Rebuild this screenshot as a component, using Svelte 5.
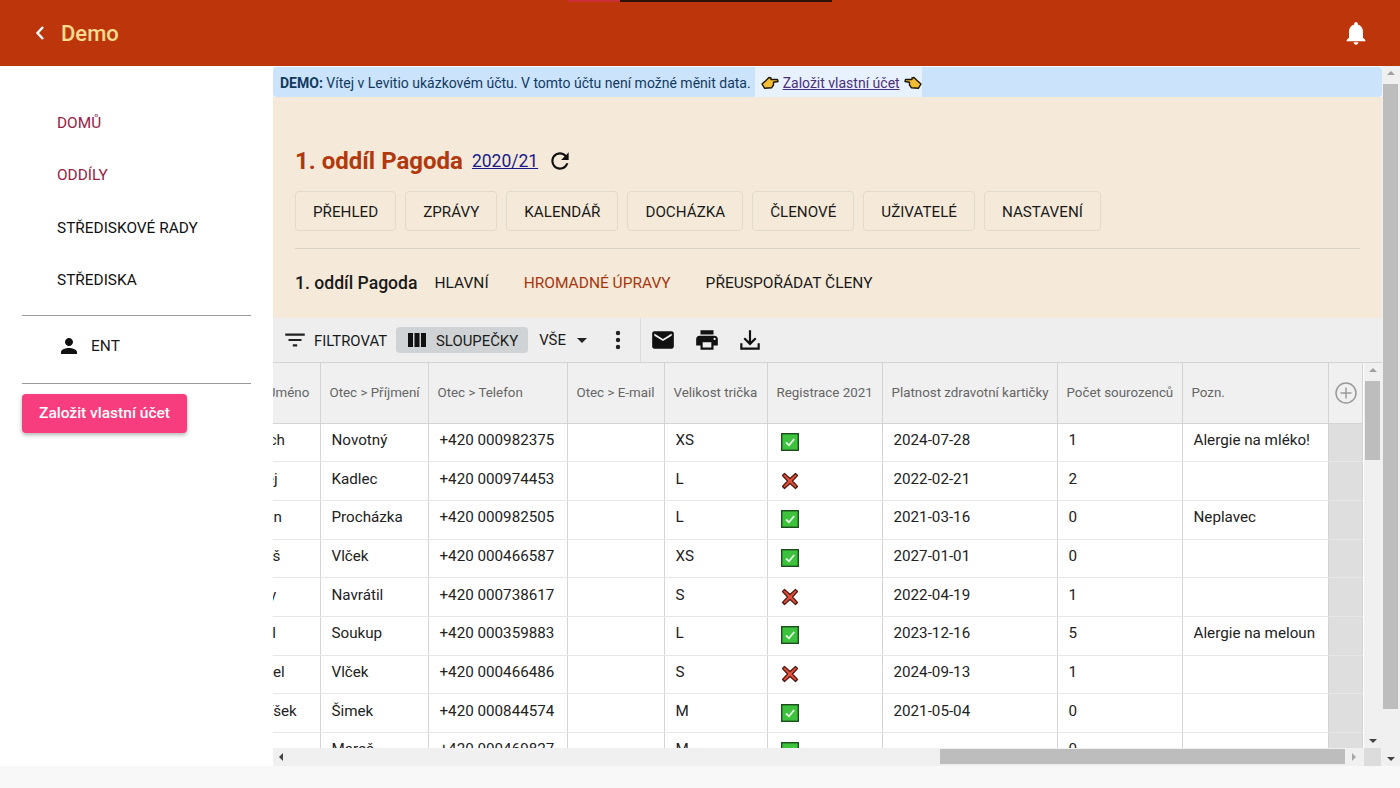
<script>
  const nav = [
    { label: 'DOMŮ', active: true },
    { label: 'ODDÍLY', active: true },
    { label: 'STŘEDISKOVÉ RADY', active: false },
    { label: 'STŘEDISKA', active: false }
  ];
  const tabs = ['PŘEHLED', 'ZPRÁVY', 'KALENDÁŘ', 'DOCHÁZKA', 'ČLENOVÉ', 'UŽIVATELÉ', 'NASTAVENÍ'];
  const columns = ['Otec > Jméno', 'Otec > Příjmení', 'Otec > Telefon', 'Otec > E-mail', 'Velikost trička', 'Registrace 2021', 'Platnost zdravotní kartičky', 'Počet sourozenců', 'Pozn.'];
  const rows = [
    ['Vojtěch', 'Novotný', '+420 000982375', 'XS', true, '2024-07-28', '1', 'Alergie na mléko!'],
    ['Andrej', 'Kadlec', '+420 000974453', 'L', false, '2022-02-21', '2', ''],
    ['Roman', 'Procházka', '+420 000982505', 'L', true, '2021-03-16', '0', 'Neplavec'],
    ['Tomáš', 'Vlček', '+420 000466587', 'XS', true, '2027-01-01', '0', ''],
    ['Danny', 'Navrátil', '+420 000738617', 'S', false, '2022-04-19', '1', ''],
    ['Daniel', 'Soukup', '+420 000359883', 'L', true, '2023-12-16', '5', 'Alergie na meloun'],
    ['Samuel', 'Vlček', '+420 000466486', 'S', false, '2024-09-13', '1', ''],
    ['Honzíšek', 'Šimek', '+420 000844574', 'M', true, '2021-05-04', '0', ''],
    ['', 'Mareš', '+420 000469827', 'M', true, '', '0', '']
  ];
</script>

<div class="page">
  <header class="topbar">
    <svg class="back" viewBox="0 0 12 16" width="12" height="16"><path d="M9 2 L3.5 8 L9 14" fill="none" stroke="#fff" stroke-width="2.4"/></svg>
    <span class="brand">Demo</span>
    <span class="spacer"></span>
    <svg class="bell" viewBox="0 0 24 24" width="28" height="28"><path fill="#fff" d="M12 22c1.1 0 2-.9 2-2h-4c0 1.1.9 2 2 2zm6-6v-5c0-3.07-1.63-5.64-4.5-6.32V4c0-.83-.67-1.5-1.5-1.5s-1.5.67-1.5 1.5v.68C7.64 5.36 6 7.92 6 11v5l-2 2v1h16v-1l-2-2z"/></svg>
    <div class="sliver"><i class="red"></i><i class="dark"></i></div>
  </header>

  <div class="body">
    <aside class="side">
      <nav class="nav">
        {#each nav as item}
          <a class="nav-item" class:active={item.active} href="#top">{item.label}</a>
        {/each}
      </nav>
      <div class="user">
        <svg viewBox="0 0 24 24" width="24" height="24"><path fill="#111" d="M12 12c2.21 0 4-1.79 4-4s-1.79-4-4-4-4 1.79-4 4 1.79 4 4 4zm0 2c-2.67 0-8 1.34-8 4v2h16v-2c0-2.66-5.33-4-8-4z"/></svg>
        <span>ENT</span>
      </div>
      <button class="cta">Založit vlastní účet</button>
    </aside>

    <main class="main">
      <div class="banner">
        <span class="banner-text"><b>DEMO:</b> Vítej v Levitio ukázkovém účtu. V tomto účtu není možné měnit data.</span>
        <span class="banner-link">
          <svg viewBox="0 0 18 13" width="18" height="13"><path d="M1 8 L5 4.5 L8 1.5 L10 2 L10 3.5 L16.5 3.5 L17 5.5 L12.5 6.2 L12.5 9 L10.5 11.8 L3.5 12.2 Z" fill="#f3bd35" stroke="#1d1607" stroke-width="1.4" stroke-linejoin="round"/></svg>
          <a href="#top">Založit vlastní účet</a>
          <svg viewBox="0 0 18 13" width="18" height="13"><path d="M17 8 L13 4.5 L10 1.5 L8 2 L8 3.5 L1.5 3.5 L1 5.5 L5.5 6.2 L5.5 9 L7.5 11.8 L14.5 12.2 Z" fill="#f3bd35" stroke="#1d1607" stroke-width="1.4" stroke-linejoin="round"/></svg>
        </span>
      </div>

      <section class="hero">
        <div class="title-row">
          <h1>1. oddíl Pagoda</h1>
          <a class="year" href="#top">2020/21</a>
          <svg viewBox="0 0 24 24" width="26" height="26"><path fill="#111" d="M17.65 6.35C16.2 4.9 14.21 4 12 4c-4.42 0-7.99 3.58-7.99 8s3.57 8 7.99 8c3.73 0 6.84-2.55 7.73-6h-2.08c-.82 2.33-3.04 4-5.65 4-3.31 0-6-2.69-6-6s2.69-6 6-6c1.66 0 3.14.69 4.22 1.78L13 11h7V4l-2.35 2.35z"/></svg>
        </div>
        <div class="tabs">
          {#each tabs as t}<button class="tab">{t}</button>{/each}
        </div>
        <div class="subrow">
          <strong>1. oddíl Pagoda</strong>
          <span class="sub">HLAVNÍ</span>
          <span class="sub current">HROMADNÉ ÚPRAVY</span>
          <span class="sub">PŘEUSPOŘÁDAT ČLENY</span>
        </div>
      </section>

      <div class="toolbar">
        <span class="tool t-filter">
          <svg viewBox="0 0 24 24" width="26" height="26"><path fill="#222" d="M10 18h4v-2h-4v2zM3 6v2h18V6H3zm3 7h12v-2H6v2z"/></svg>
          <span class="lbl">FILTROVAT</span>
        </span>
        <span class="tool t-cols">
          <svg viewBox="0 0 24 24" width="24" height="24"><path fill="#111" d="M3 5h5v14H3zM9.5 5h5v14h-5zM16 5h5v14h-5z"/></svg>
          <span class="lbl">SLOUPEČKY</span>
        </span>
        <span class="tool t-all">VŠE <i class="caret"></i></span>
        <svg class="dots" viewBox="0 0 6 24" width="6" height="24"><circle cx="3" cy="5" r="2.2" fill="#222"/><circle cx="3" cy="12" r="2.2" fill="#222"/><circle cx="3" cy="19" r="2.2" fill="#222"/></svg>
        <span class="sep"></span>
        <svg class="ic-mail" viewBox="0 0 24 24" width="26" height="26"><path fill="#111" d="M20 4H4c-1.1 0-2 .9-2 2v12c0 1.1.9 2 2 2h16c1.1 0 2-.9 2-2V6c0-1.1-.9-2-2-2zm0 4l-8 5-8-5V6l8 5 8-5v2z"/></svg>
        <svg class="ic-print" viewBox="0 0 24 24" width="26" height="26"><path fill="#111" d="M19 8H5c-1.66 0-3 1.34-3 3v6h4v4h12v-4h4v-6c0-1.66-1.34-3-3-3zm-3 11H8v-5h8v5zm3-7c-.55 0-1-.45-1-1s.45-1 1-1 1 .45 1 1-.45 1-1 1zm-1-9H6v4h12V3z"/></svg>
        <svg class="ic-down" viewBox="0 0 24 24" width="26" height="26"><path fill="#111" d="M16.6 9.6 13 13.2V3h-2v10.2L7.4 9.6 6 11l6 6 6-6-1.4-1.4zM19 19V15h2v6H3v-6h2v4h14z"/></svg>
      </div>

      <div class="grid-area">
        <div class="table-view">
          <table>
            <thead>
              <tr>
                {#each columns as c}<th>{c}</th>{/each}
                <th class="add">
                  <svg viewBox="0 0 24 24" width="24" height="24"><circle cx="12" cy="12" r="10" fill="none" stroke="#9a9a9a" stroke-width="1.5"/><path d="M12 6.5v11M6.5 12h11" stroke="#9a9a9a" stroke-width="1.5"/></svg>
                </th>
              </tr>
            </thead>
            <tbody>
              {#each rows as r}
                <tr>
                  <td>{r[0]}</td>
                  <td>{r[1]}</td>
                  <td>{r[2]}</td>
                  <td></td>
                  <td>{r[3]}</td>
                  <td class="mark">
                    {#if r[4]}
                      <svg viewBox="0 0 18 18" width="18" height="18"><rect x=".7" y=".7" width="16.6" height="16.6" fill="#3cc23c" stroke="#1b4f1b" stroke-width="1.4"/><path d="M5 9.5 L8 12.3 L13.2 6" fill="none" stroke="#e8fbe8" stroke-width="1.8"/></svg>
                    {:else}
                      <svg viewBox="0 0 18 18" width="18" height="18"><path d="M3.5 1.5 L9 6.5 L14.5 1.5 L16.5 3.5 L11.5 9 L16.5 14.5 L14.5 16.5 L9 11.5 L3.5 16.5 L1.5 14.5 L6.5 9 L1.5 3.5 Z" fill="#e2503a" stroke="#4c1a12" stroke-width="1.2" stroke-linejoin="round"/></svg>
                    {/if}
                  </td>
                  <td>{r[5]}</td>
                  <td>{r[6]}</td>
                  <td>{r[7]}</td>
                  <td class="filler"></td>
                </tr>
              {/each}
            </tbody>
          </table>
        </div>

        <div class="vbar">
          <i class="arrow up"></i>
          <div class="vthumb"></div>
          <i class="arrow down"></i>
        </div>
        <div class="hbar">
          <i class="arrow left"></i>
          <div class="hthumb"></div>
          <i class="arrow right"></i>
          <div class="corner"></div>
        </div>
      </div>
    </main>

    <div class="page-bar">
      <i class="arrow up"></i>
      <div class="page-thumb"></div>
      <i class="arrow down"></i>
    </div>
  </div>
  <div class="foot"></div>
</div>

<style>
  :global(body) { margin: 0; background: #f8f8f8; overflow: hidden; }
  .page { width: 1400px; height: 788px; display: flex; flex-direction: column; font-family: Roboto, "Liberation Sans", sans-serif; color: #1a1a1a; overflow: hidden; }
  .topbar { position: relative; flex: 0 0 66px; background: #bd360b; display: flex; align-items: center; padding: 0 30px 0 34px; }
  .back { margin-right: 15px; }
  .brand { color: #fddc92; font-size: 22px; font-weight: 500; }
  .spacer { flex: 1; }
  .sliver { position: absolute; left: 568px; top: 0; display: flex; height: 2px; }
  .sliver .red { width: 52px; background: #c9303a; }
  .sliver .dark { width: 212px; background: #2a1208; }

  .body { flex: 0 0 700px; display: flex; min-height: 0; }
  .side { flex: 0 0 273px; box-sizing: border-box; background: #fff; padding: 30.5px 22px 0; }
  .nav { display: flex; flex-direction: column; border-bottom: 1px solid #999; padding-bottom: 8.1px; }
  .nav-item { height: 52.6px; line-height: 52.6px; padding-left: 35px; font-size: 15.4px; color: #111; text-decoration: none; }
  .nav-item.active { color: #982244; }
  .user { display: flex; align-items: center; gap: 10px; height: 67px; box-sizing: content-box; padding: 0 0 0 35px; border-bottom: 1px solid #999; font-size: 15.5px; }
  .user svg, .user span { position: relative; top: -3px; }
  .cta { margin-top: 10px; display: block; width: 165px; height: 39px; background: #f73d7e; color: #fff; border: 0; border-radius: 4px; font: 500 15.5px Roboto, sans-serif; box-shadow: 0 2px 4px rgba(0,0,0,.3); }

  .main { flex: 0 0 1109px; display: flex; flex-direction: column; min-width: 0; }
  .banner { flex: 0 0 30px; margin-top: 1px; background: #cbe3fb; border-radius: 4px; display: flex; align-items: center; padding-left: 7px; font-size: 14px; color: #123a63; box-sizing: border-box; }
  .banner-text { white-space: nowrap; padding-top: 1px; }
  .banner-link { margin-left: 4px; height: 30px; width: 167px; background: #e7f2fe; display: flex; align-items: center; gap: 4px; padding: 1px 0 0 6px; box-sizing: border-box; }
  .banner-link a { color: #4b2f7a; white-space: nowrap; }
  .hero { flex: 0 0 221px; box-sizing: border-box; background: #f5ead9; padding: 47px 22px 0; display: flex; flex-direction: column; }
  .title-row { display: flex; align-items: center; height: 34px; }
  h1 { margin: 0; font-size: 24px; font-weight: 700; color: #b2380e; }
  .year { margin: 0 9px; font-size: 17.5px; color: #1a1a8c; }
  .tabs { display: flex; gap: 9px; margin-top: 13px; padding-bottom: 17px; border-bottom: 1px solid #d9d1c4; }
  .tab { height: 40px; padding: 2px 17px 0; background: #f5ead9; border: 1px solid #e2dacc; border-radius: 4px; font: 400 15.2px Roboto, sans-serif; color: #1a1a1a; }
  .subrow { display: flex; align-items: center; height: 68px; box-sizing: border-box; font-size: 15.5px; }
  .subrow strong { font-size: 17.6px; font-weight: 500; margin-right: 17px; }
  .sub { margin-right: 35px; }
  .sub.current { color: #a8370f; }

  .toolbar { flex: 0 0 44px; box-sizing: border-box; background: #eee; border-bottom: 1px solid #d4d4d4; display: flex; align-items: center; font-size: 14.9px; }
  .tool { display: inline-flex; align-items: center; }
  .lbl { padding-top: 2px; }
  .t-filter { margin-left: 9px; gap: 6px; width: 114px; }
  .t-cols { gap: 7px; height: 26px; padding: 0 10px 0 9px; background: #d0d3d5; border-radius: 4px; }
  .t-all { margin-left: 11px; gap: 10px; }
  .caret { display: inline-block; border: 5.5px solid transparent; border-top-color: #222; border-bottom: 0; margin-left: 1px; }
  .dots { margin-left: 28px; }
  .sep { width: 1px; height: 44px; background: #dcdcdc; margin: 0 9px 0 19px; }
  .ic-mail { margin-right: 18px; }
  .ic-print { margin-right: 17px; }

  .grid-area { flex: 1; min-height: 0; position: relative; background: #fff; overflow: hidden; }
  .table-view { position: absolute; left: 0; top: 0; right: 18px; bottom: 18px; overflow: hidden; }
  table { border-collapse: collapse; table-layout: fixed; width: 1155px; margin-left: -100px; font-size: 15.2px; }
  th, td { border: 1px solid #d4d4d4; box-sizing: border-box; padding: 0 0 0 8.5px; text-align: left; white-space: nowrap; overflow: hidden; }
  thead th { height: 60px; background: #f0f0f0; color: #666; font-size: 13.35px; font-weight: 400; border-top: 0; }
  tbody td { height: 38.7px; padding: 0 0 5px 10.5px; color: #222; vertical-align: middle; border-top-color: #e6e6e6; border-bottom-color: #e6e6e6; }
  thead th:first-child { padding-left: 53px; }
  tbody td:first-child { padding-left: 60px; }
  tbody td.mark { padding: 0 0 1px 13px; line-height: 0; }
  th:nth-child(1) { width: 147px; }
  th:nth-child(2) { width: 108px; }
  th:nth-child(3) { width: 139px; }
  th:nth-child(4) { width: 97px; }
  th:nth-child(5) { width: 103px; }
  th:nth-child(6) { width: 115px; }
  th:nth-child(7) { width: 175px; }
  th:nth-child(8) { width: 125px; }
  th:nth-child(9) { width: 146px; }
  th:nth-child(10) { width: 34px; padding: 0 0 0 5px; }
  th.add svg { display: block; }
  tbody td.filler { background: #dedede; padding: 0; }

  .vbar { position: absolute; right: 0; top: 0; bottom: 18px; width: 18px; background: #f0f0f0; }
  .vthumb { position: absolute; left: 1px; top: 18px; width: 15px; height: 79px; background: #bdbdbd; }
  .hbar { position: absolute; left: 0; right: 0; bottom: 0; height: 18px; background: #f0f0f0; }
  .hthumb { position: absolute; left: 667px; top: 1px; width: 405px; height: 15px; background: #bdbdbd; }
  .corner { position: absolute; right: 1px; top: 0; width: 17px; height: 18px; background: #dcdcdc; }
  .arrow { position: absolute; width: 0; height: 0; border: 4px solid transparent; }
  .arrow.up { top: 5px; left: 5px; border-bottom-color: #a0a0a0; border-top: 0; }
  .arrow.down { bottom: 5px; left: 5px; border-top-color: #444; border-bottom: 0; }
  .arrow.left { left: 6px; top: 5px; border-right-color: #444; border-left: 0; }
  .arrow.right { left: 1079px; top: 5px; border-left-color: #a8a8a8; border-right: 0; }

  .page-bar { flex: 0 0 18px; position: relative; background: #f0f0f0; }
  .page-thumb { position: absolute; left: 1px; top: 18px; width: 15px; height: 625px; background: #bdbdbd; }

  .foot { flex: 1; background: #f8f8f8; }
</style>
